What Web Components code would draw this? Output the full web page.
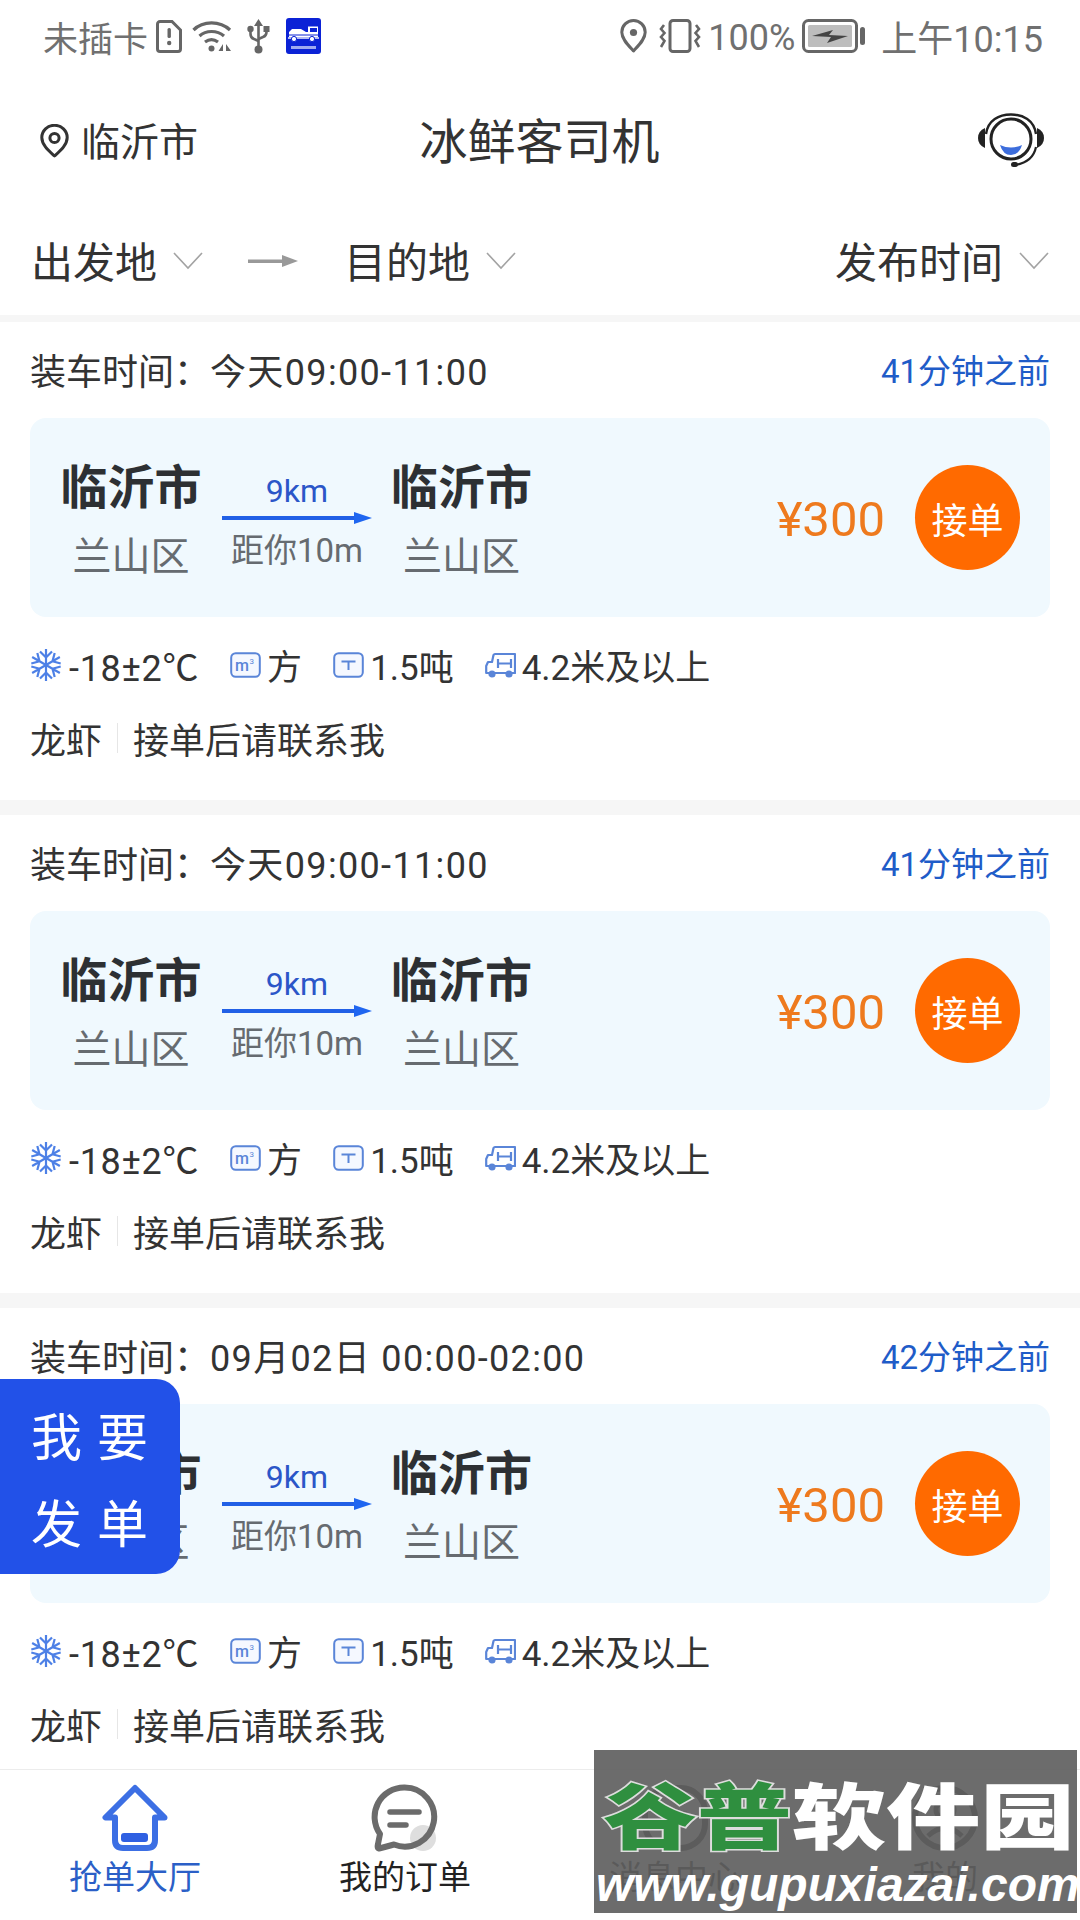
<!DOCTYPE html>
<html lang="zh">
<head>
<meta charset="utf-8">
<title>冰鲜客司机</title>
<style>
  html, body { margin: 0; padding: 0; background: #fff; }
  body { font-family: Roboto, "Noto Sans CJK SC", sans-serif; color: #333; }
</style>
</head>
<body>
<driver-app>
  <status-bar slot="status"></status-bar>
  <app-header slot="header" city="临沂市" title="冰鲜客司机"></app-header>
  <filter-bar slot="filter"></filter-bar>
  <order-card load="今天09:00-11:00" ago="41分钟之前"></order-card>
  <order-card load="今天09:00-11:00" ago="41分钟之前"></order-card>
  <order-card load="09月02日 00:00-02:00" ago="42分钟之前"></order-card>
  <bottom-nav slot="nav"></bottom-nav>
  <publish-fab slot="overlay"></publish-fab>
  <water-mark slot="overlay"></water-mark>
</driver-app>

<script>
// Icon set shared by all components
const ICONS = {
  sim: `<svg width="26" height="33" viewBox="0 0 26 33"><path d="M4 1.5H16L24.5 10V29a2.5 2.5 0 0 1-2.5 2.5H4A2.5 2.5 0 0 1 1.5 29V4A2.5 2.5 0 0 1 4 1.5Z" fill="none" stroke="#666" stroke-width="3"/><rect x="11.5" y="8" width="3.4" height="10" rx="1.5" fill="#666"/><circle cx="13.2" cy="23" r="2.2" fill="#666"/></svg>`,
  wifi: `<svg width="40" height="34" viewBox="0 0 40 34" fill="none" stroke="#666" stroke-width="3.2"><path d="M1.5 11C11 1.5 28 1.5 38 11"/><path d="M7.5 17C14 11 25 11 32 17"/><path d="M13 23C17 20 22 20 26 23"/><circle cx="19.5" cy="29.5" r="3" fill="#666" stroke="none"/><path d="M31 25 26.5 32H31Z M34 25V32H39Z" fill="#666" stroke="none"/></svg>`,
  usb: `<svg width="23" height="35" viewBox="0 0 23 35" fill="none" stroke="#666" stroke-width="2.6"><path d="M11.5 3V30"/><path d="M11.5 0 7 7H16Z" fill="#666" stroke="none"/><circle cx="11.5" cy="30.5" r="4" fill="#666" stroke="none"/><path d="M3.5 11V15Q3.5 19 7 20L11.5 22"/><path d="M19.5 11V13Q19.5 17 16 18L11.5 20"/><circle cx="3.5" cy="10" r="3.2" fill="#666" stroke="none"/><rect x="16.5" y="7" width="6" height="6" fill="#666" stroke="none"/></svg>`,
  appTruck: `<svg width="35" height="36" viewBox="0 0 35 36"><rect width="35" height="36" rx="3" fill="#0b22d6"/><path d="M3 14 6 11H15L20 14H22V8.5H32V19H3Z" fill="#fff"/><rect x="24" y="10" width="7" height="4" fill="#0b22d6"/><path d="M2.5 17H32" stroke="#0b22d6" stroke-width="1"/><path d="M2 20H33" stroke="#fff" stroke-width="1.4"/><circle cx="8" cy="21" r="2.6" fill="#fff" stroke="#0b22d6"/><circle cx="26" cy="21" r="2.6" fill="#fff" stroke="#0b22d6"/><rect x="5" y="28" width="25" height="3" fill="#9fa9f0"/></svg>`,
  pinGray: `<svg width="27" height="34" viewBox="0 0 27 34" fill="none"><path d="M13.5 32C8 26 1.8 20 1.8 13.2A11.7 11.7 0 0 1 25.2 13.2C25.2 20 19 26 13.5 32Z" stroke="#666" stroke-width="3" stroke-linejoin="round"/><circle cx="13.5" cy="13.5" r="3.6" fill="#666"/></svg>`,
  vibrate: `<svg width="42" height="34" viewBox="0 0 42 34" fill="none" stroke="#666" stroke-width="2.6"><rect x="11" y="1.5" width="20" height="31" rx="3" stroke-width="3"/><path d="M5 6 2 10 5.500 14 2 18 5.500 22 2 28"/><path d="M37 6 40 10 36.500 14 40 18 36.500 22 40 28"/></svg>`,
  battery: `<svg width="64" height="34" viewBox="0 0 64 34"><rect x="1.500" y="1.500" width="53" height="31" rx="5" fill="none" stroke="#666" stroke-width="3"/><rect x="6" y="6" width="44" height="22" rx="1.500" fill="#bdbdbd"/><path d="M10 17 31 11 27 16 46 17 25 24 29 18Z" fill="#444"/><rect x="58" y="8" width="5" height="18" rx="2.500" fill="#666"/></svg>`,
  pin: `<svg width="29" height="34" viewBox="0 0 29 34" fill="none"><path d="M14.500 32C9 27 1.800 21 1.800 13.500A12.700 12.200 0 0 1 27.200 13.500C27.200 21 20 27 14.500 32Z" stroke="#333" stroke-width="3" stroke-linejoin="round"/><circle cx="14.500" cy="14" r="4.600" stroke="#333" stroke-width="3"/></svg>`,
  headset: `<svg width="66" height="56" viewBox="0 0 66 56" fill="none"><path d="M8 21C10 7 21 1.500 33 1.500S56 7 58 21" stroke="#222" stroke-width="2.400"/><circle cx="33" cy="26" r="20" stroke="#222" stroke-width="3"/><path d="M22 32Q33 37 44 32Q41 42 33 42T22 32Z" fill="#3d6ddc"/><path d="M7 15Q0 18 0 25T7 35Z" fill="#222"/><path d="M59 15Q66 18 66 25T59 35Z" fill="#222"/><path d="M58 34Q55 49 37 52" stroke="#222" stroke-width="2.200"/><rect x="33" y="49" width="7" height="5" rx="2.500" fill="#222"/></svg>`,
  chevron: `<svg width="30" height="18" viewBox="0 0 30 18" fill="none"><path d="M1 1 15 16 29 1" stroke="#a3a3a3" stroke-width="1.600"/></svg>`,
  grayArrow: `<svg width="50" height="14" viewBox="0 0 50 14"><rect y="5.500" width="36" height="3.500" fill="#999"/><path d="M34 1 50 7 34 13Z" fill="#999"/></svg>`,
  blueArrow: `<svg width="150" height="14" viewBox="0 0 150 14"><rect y="5" width="138" height="4" fill="#2160e6"/><path d="M132 1 150 7 132 13Z" fill="#1f66f0"/></svg>`,
  snow: `<svg width="32" height="32" viewBox="0 0 32 32" fill="none" stroke="#4d80e6" stroke-width="2.200"><path d="M16 0V32M10 2.500 16 8.500 22 2.500M10 29.500 16 23.500 22 29.500"/><path d="M16 0V32M10 2.500 16 8.500 22 2.500M10 29.500 16 23.500 22 29.500" transform="rotate(60 16 16)"/><path d="M16 0V32M10 2.500 16 8.500 22 2.500M10 29.500 16 23.500 22 29.500" transform="rotate(120 16 16)"/></svg>`,
  volume: `<svg width="31" height="26" viewBox="0 0 31 26"><rect x="1.200" y="1.200" width="28.600" height="23.600" rx="4.500" fill="#f5f8ff" stroke="#5a85d8" stroke-width="2"/><text x="5" y="19" font-family="Roboto, sans-serif" font-size="16" font-weight="500" fill="#5a85d8">m</text><text x="19.500" y="12" font-family="Roboto, sans-serif" font-size="8" fill="#5a85d8">3</text></svg>`,
  weight: `<svg width="31" height="26" viewBox="0 0 31 26" fill="none" stroke="#5a85d8" stroke-width="2"><rect x="1.200" y="1.200" width="28.600" height="23.600" rx="4.500" fill="#f5f8ff"/><path d="M8.500 9.500H22.500M15.500 9.500V18"/></svg>`,
  truck: `<svg width="31" height="26" viewBox="0 0 31 26" fill="none" stroke="#5a85d8" stroke-width="2.200" stroke-linejoin="round"><path d="M9 21H30V2H10Q9 2 8.500 3L7 10H3L1.200 14V21H5"/><path d="M13 7V16M26 7V16M13 11.500H26"/><circle cx="7" cy="22" r="2.500" fill="#5a85d8"/><circle cx="24" cy="22" r="2.500" fill="#5a85d8"/></svg>`,
  home: `<svg width="66" height="68" viewBox="0 0 66 68" fill="none"><path d="M33 4 3.500 33.500H13V56Q13 64 21 64H45Q53 64 53 56V33.500H62.500Z" stroke="#3c6fe4" stroke-width="6" stroke-linejoin="round"/><rect x="19" y="49" width="27" height="9" rx="3" fill="#2f60e2"/></svg>`,
  chat: `<svg width="68" height="68" viewBox="0 0 68 68" fill="none"><circle cx="52" cy="54" r="13" fill="#dedede"/><path d="M33.500 3.500A29.500 29.500 0 1 1 23 60.500Q14 63 8 64.500Q6 64 7 60L9 50A29.500 29.500 0 0 1 33.500 3.500Z" stroke="#6b6b6b" stroke-width="6" stroke-linejoin="round"/><path d="M19 28H48M19 41H35" stroke="#6b6b6b" stroke-width="5.500" stroke-linecap="round"/></svg>`,
  message: `<svg width="68" height="68" viewBox="0 0 68 68" fill="none" stroke="#333" stroke-width="6"><rect x="4" y="4" width="60" height="60" rx="24"/><path d="M22 30H46M22 42H38" stroke-width="5"/></svg>`,
  mine: `<svg width="68" height="68" viewBox="0 0 68 68" fill="none" stroke="#333" stroke-width="6"><circle cx="34" cy="34" r="30"/><circle cx="34" cy="26" r="9" stroke-width="5"/><path d="M17 52Q34 36 51 52" stroke-width="5"/></svg>`
};

class AppIcon extends HTMLElement {
  constructor() {
    super();
    this.attachShadow({ mode: 'open' });
  }
  connectedCallback() {
    this.shadowRoot.innerHTML = `<style>:host{display:inline-flex;flex:none;line-height:0}</style>${ICONS[this.getAttribute('name')] || ''}`;
  }
}
customElements.define('app-icon', AppIcon);

class DriverApp extends HTMLElement {
  constructor() {
    super();
    this.attachShadow({ mode: 'open' });
    this.shadowRoot.innerHTML = `
      <style>
        :host { display: flex; flex-direction: column; position: relative; width: 1080px; height: 1920px; overflow: hidden; background: #fff; }
        .list { flex: 1; min-height: 0; overflow: hidden; background: #f6f6f6; padding-top: 7px; display: flex; flex-direction: column; gap: 15px; }
      </style>
      <slot name="status"></slot>
      <slot name="header"></slot>
      <slot name="filter"></slot>
      <div class="list"><slot></slot></div>
      <slot name="nav"></slot>
      <slot name="overlay"></slot>
    `;
  }
}
customElements.define('driver-app', DriverApp);

class StatusBar extends HTMLElement {
  constructor() {
    super();
    this.attachShadow({ mode: 'open' });
    this.shadowRoot.innerHTML = `
      <style>
        :host { display: flex; align-items: center; height: 72px; flex: none; padding: 0 37px 0 43px; font-size: 35px; color: #707070; }
        .group { display: flex; align-items: center; }
        .right { margin-left: auto; }
        .pct { margin: 4px 0 0 7px; font-size: 36px; }
        .clock { margin-left: 15px; font-size: 36px; }
      </style>
      <div class="group">
        <span>未插卡</span>
        <app-icon name="sim" style="margin-left:8px"></app-icon>
        <app-icon name="wifi" style="margin-left:10px"></app-icon>
        <app-icon name="usb" style="margin-left:15px"></app-icon>
        <app-icon name="appTruck" style="margin-left:16px"></app-icon>
      </div>
      <div class="group right">
        <app-icon name="pinGray"></app-icon>
        <app-icon name="vibrate" style="margin-left:12px"></app-icon>
        <span class="pct">100%</span>
        <app-icon name="battery" style="margin-left:7px"></app-icon>
        <span class="clock">上午10:15</span>
      </div>
    `;
  }
}
customElements.define('status-bar', StatusBar);

class AppHeader extends HTMLElement {
  constructor() {
    super();
    this.attachShadow({ mode: 'open' });
    this.shadowRoot.innerHTML = `
      <style>
        :host { display: grid; grid-template-columns: 1fr auto 1fr; align-items: center; flex: none; height: 138px; padding: 0 36px 0 40px; color: #333; }
        .city { display: flex; align-items: center; gap: 12px; font-size: 39px; }
        .city span { margin-bottom: 5px; }
        .title { font-size: 48px; margin: 0 5px 7px 0; }
        .service { justify-self: end; display: flex; }
      </style>
      <div class="city"><app-icon name="pin"></app-icon><span id="city"></span></div>
      <div class="title" id="title"></div>
      <div class="service"><app-icon name="headset"></app-icon></div>
    `;
  }
  connectedCallback() {
    this.shadowRoot.getElementById('city').textContent = this.getAttribute('city');
    this.shadowRoot.getElementById('title').textContent = this.getAttribute('title');
  }
}
customElements.define('app-header', AppHeader);

class FilterBar extends HTMLElement {
  constructor() {
    super();
    this.attachShadow({ mode: 'open' });
    this.shadowRoot.innerHTML = `
      <style>
        :host { display: flex; align-items: center; flex: none; height: 105px; box-sizing: border-box; padding: 0 31px 6px 31px; font-size: 42px; color: #333; }
        .item { display: flex; align-items: center; gap: 16px; }
        .item app-icon { margin-top: 3px; }
        .arrow { margin: 2px 46px 0 45px; display: flex; }
        .time { margin-left: auto; }
      </style>
      <div class="item"><span>出发地</span><app-icon name="chevron"></app-icon></div>
      <div class="arrow"><app-icon name="grayArrow"></app-icon></div>
      <div class="item"><span>目的地</span><app-icon name="chevron"></app-icon></div>
      <div class="item time"><span>发布时间</span><app-icon name="chevron"></app-icon></div>
    `;
  }
}
customElements.define('filter-bar', FilterBar);

class OrderCard extends HTMLElement {
  constructor() {
    super();
    this.attachShadow({ mode: 'open' });
    this.shadowRoot.innerHTML = `
      <style>
        :host { display: block; flex: none; height: 478px; padding: 0 30px; background: #fff; color: #333; box-sizing: border-box; }
        .top { display: flex; align-items: center; justify-content: space-between; height: 96px; box-sizing: border-box; padding-bottom: 3px; font-size: 36px; }
        .top .load { display: flex; }
        .top .value { letter-spacing: 1.350px; }
        .ago { color: #1f5cc8; font-size: 33px; }
        .box { display: flex; align-items: center; height: 199px; padding: 0 30px 0 30px; background: #f0f9fe; border-radius: 16px; }
        .route { display: flex; height: 199px; box-sizing: border-box; padding-top: 50px; gap: 20px; }
        .city { width: 142px; margin-top: -7px; text-align: center; white-space: nowrap; }
        .city:last-child { margin-left: -1.500px; }
        .name { font-size: 47px; line-height: 54px; font-weight: 700; color: #2d3033; }
        .area { font-size: 39px; line-height: 46px; margin-top: 19px; color: #666b70; }
        .mid { width: 150px; margin-top: 5px; text-align: center; }
        .km { font-size: 32px; line-height: 37px; color: #2b56c8; }
        .mid app-icon { display: flex; margin-top: 1px; }
        .near { font-size: 33px; line-height: 40px; margin-top: 6px; color: #666b70; }
        .price { margin: 3px 0 0 auto; font-size: 49px; color: #ee7a1e; }
        .take { display: flex; align-items: center; justify-content: center; width: 105px; height: 105px; margin-left: 30px; border-radius: 50%; background: #ff6a00; color: #fff; font-size: 36px; }
        .specs { display: flex; align-items: center; height: 100px; box-sizing: border-box; padding-bottom: 5px; font-size: 35px; }
        .specs .txt { margin-left: 6px; }
        .specs .temp { margin-left: 7px; font-size: 36px; letter-spacing: .7px; }
        .specs app-icon + .txt + app-icon { margin-left: 31px; }
        .note { display: flex; align-items: center; height: 46px; box-sizing: border-box; padding-bottom: 5px; font-size: 36px; }
        .note i { width: 1px; height: 30px; margin: 0 15px; background: #e6e6e6; }
      </style>
      <div class="top">
        <div class="load"><span>装车时间：</span><span class="value" id="load"></span></div>
        <div class="ago" id="ago"></div>
      </div>
      <div class="box">
        <div class="route">
          <div class="city"><div class="name">临沂市</div><div class="area">兰山区</div></div>
          <div class="mid"><div class="km">9km</div><app-icon name="blueArrow"></app-icon><div class="near">距你10m</div></div>
          <div class="city"><div class="name">临沂市</div><div class="area">兰山区</div></div>
        </div>
        <div class="price">¥300</div>
        <div class="take">接单</div>
      </div>
      <div class="specs">
        <app-icon name="snow"></app-icon><span class="txt temp">-18±2℃</span>
        <app-icon name="volume"></app-icon><span class="txt">方</span>
        <app-icon name="weight"></app-icon><span class="txt">1.5吨</span>
        <app-icon name="truck"></app-icon><span class="txt">4.2米及以上</span>
      </div>
      <div class="note"><span>龙虾</span><i></i><span>接单后请联系我</span></div>
    `;
  }
  connectedCallback() {
    this.shadowRoot.getElementById('load').textContent = this.getAttribute('load');
    this.shadowRoot.getElementById('ago').textContent = this.getAttribute('ago');
  }
}
customElements.define('order-card', OrderCard);

class NavItem extends HTMLElement {
  constructor() {
    super();
    this.attachShadow({ mode: 'open' });
    this.shadowRoot.innerHTML = `
      <style>
        :host { display: flex; flex-direction: column; align-items: center; flex: 1; padding-top: 14px; font-size: 33px; color: #222; }
        :host([active]) { color: #2b5fc7; }
        .label { line-height: 44px; margin-top: 4px; }
      </style>
      <slot name="icon"></slot>
      <div class="label"><slot></slot></div>
    `;
  }
}
customElements.define('nav-item', NavItem);

class BottomNav extends HTMLElement {
  constructor() {
    super();
    this.attachShadow({ mode: 'open' });
    this.shadowRoot.innerHTML = `
      <style>
        :host { display: flex; flex: none; height: 151px; box-sizing: border-box; border-top: 1px solid #ececec; background: #fff; }
      </style>
      <nav-item active><app-icon slot="icon" name="home"></app-icon>抢单大厅</nav-item>
      <nav-item><app-icon slot="icon" name="chat"></app-icon>我的订单</nav-item>
      <nav-item><app-icon slot="icon" name="message"></app-icon>消息中心</nav-item>
      <nav-item><app-icon slot="icon" name="mine"></app-icon>我的</nav-item>
    `;
  }
}
customElements.define('bottom-nav', BottomNav);

class PublishFab extends HTMLElement {
  constructor() {
    super();
    this.attachShadow({ mode: 'open' });
    this.shadowRoot.innerHTML = `
      <style>
        :host { position: absolute; left: 0; top: 1379px; width: 180px; height: 195px; box-sizing: border-box; padding: 10px 0 0 31px; display: flex; flex-direction: column; justify-content: center; background: #2251e8; border-radius: 0 24px 24px 0; color: #fff; font-size: 51px; line-height: 87px; letter-spacing: 15px; }
      </style>
      <div>我要</div>
      <div>发单</div>
    `;
  }
}
customElements.define('publish-fab', PublishFab);

class WaterMark extends HTMLElement {
  constructor() {
    super();
    this.attachShadow({ mode: 'open' });
    this.shadowRoot.innerHTML = `
      <style>
        :host { position: absolute; left: 594px; top: 1750px; width: 483px; height: 163px; box-sizing: border-box; padding: 20px 0 0 9px; background: rgba(95,95,95,.92); white-space: nowrap; overflow: visible; }
        .name { font-family: "Noto Sans CJK SC", sans-serif; font-size: 72px; line-height: 84px; font-weight: 900; color: #fff; transform: scaleX(1.31); transform-origin: left center; }
        .name b { color: #2f8f3f; -webkit-text-stroke: 3px #ddd; paint-order: stroke fill; font-weight: 900; }
        .url { font-family: "Liberation Sans", sans-serif; font-style: italic; font-weight: 700; font-size: 48px; line-height: 48px; margin: 7px 0 0 -7px; color: #fff; }
      </style>
      <div class="name"><b>谷普</b>软件园</div>
      <div class="url">www.gupuxiazai.com</div>
    `;
  }
}
customElements.define('water-mark', WaterMark);
</script>
</body>
</html>
